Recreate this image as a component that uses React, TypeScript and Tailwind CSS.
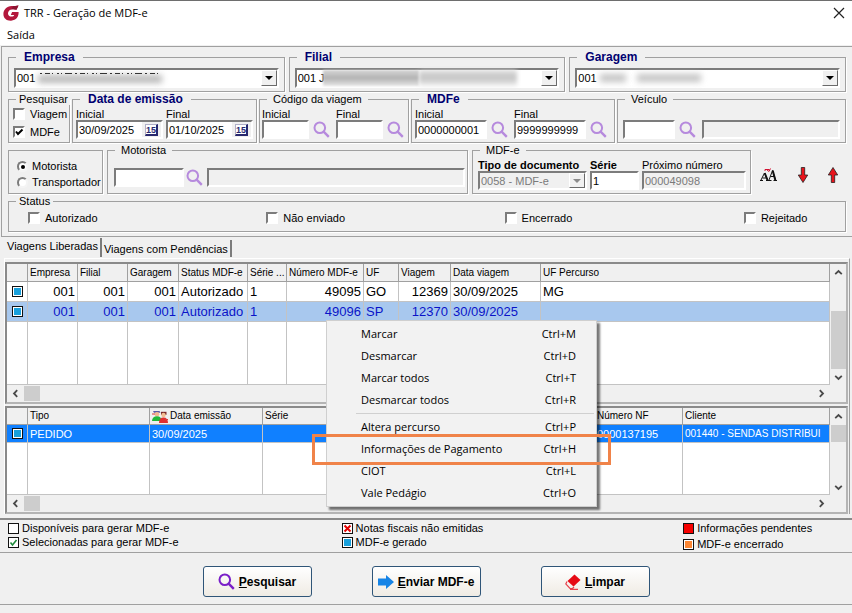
import type { ReactNode } from 'react'
import clsx from 'clsx'

const SUNKEN = 'border-2 border-t-[#7c7c7c] border-l-[#7c7c7c] border-r-white border-b-white'
const RAISED = 'border border-t-white border-l-white border-r-[#6a6a6a] border-b-[#6a6a6a]'

function Logo() {
  return (
    <svg viewBox="0 0 16 16" className="w-4 h-4 shrink-0">
      <path d="M15.500 .5 13.500 4.800C11.800 4.100 10 4 8.400 4.400 6.200 5 5 6.500 5 8.400c0 2 1.500 3.200 3.600 3.200 1.300 0 2.300-.5 2.600-1.500H7.800l1.300-3h6.500c.2 4.600-2.300 8.400-7.500 8.600C3.500 15.900.4 13.200.4 9 .4 4.600 3.700 1.200 8.600.9c2.400-.1 4.700.4 6.900-.4z" fill="#b3183c" />
      <path d="M15.500.5 13.500 4.800C11.800 4.100 10 4 8.400 4.400L10.200.9c1.800 0 3.600.2 5.300-.4z" fill="#8c1330" />
    </svg>
  )
}

function SearchIcon({ color = '#b68add' }: { color?: string }) {
  return (
    <svg viewBox="0 0 17 17" className="w-[17px] h-[17px]" fill="none" stroke={color}>
      <circle cx="6.800" cy="6.800" r="5.300" strokeWidth="2" />
      <path d="M10.600 10.600 15.800 15.800" strokeWidth="2.400" />
    </svg>
  )
}

function SearchButton({ label }: { label: string }) {
  return (
    <button type="button" aria-label={label} className="shrink-0 w-[19px] h-[19px] flex items-center">
      <SearchIcon />
    </button>
  )
}

function Chevron({ dir }: { dir: 'up' | 'down' | 'left' | 'right' }) {
  const paths = {
    up: 'M1.200 6.200 4.500 3l3.300 3.200',
    down: 'M1.200 2.800 4.500 6l3.300-3.200',
    left: 'M6.200 1.200 3 4.500l3.200 3.300',
    right: 'M2.800 1.200 6 4.500 2.800 7.800',
  }
  return (
    <svg viewBox="0 0 9 9" className="w-[9px] h-[9px]" fill="none" stroke="#4a4a4a" strokeWidth="1.800">
      <path d={paths[dir]} />
    </svg>
  )
}

type GroupProps = { title: string; bold?: boolean; near?: boolean; className?: string; children: ReactNode }

function Group({ title, bold, near, className, children }: GroupProps) {
  return (
    <fieldset className={clsx('min-w-0 border border-[#a0a0a0] shadow-[1px_1px_0_#fff]', className)}>
      <legend
        className={clsx(
          'ml-[7px] leading-[12px] whitespace-nowrap',
          bold ? 'px-2 text-[12px] font-bold text-[#000070]' : near ? 'px-[3px]' : 'px-[6px]',
        )}
      >
        {title}
      </legend>
      {children}
    </fieldset>
  )
}

function DropArrow({ disabled }: { disabled?: boolean }) {
  return (
    <span className={clsx('absolute top-[2px] right-[2px] bottom-[2px] w-4 flex items-center justify-center bg-[#f0f0f0] pointer-events-none', RAISED)}>
      <svg viewBox="0 0 8 4" className="w-2 h-1">
        <path d="M0 0h8L4 4z" fill={disabled ? '#8a8a8a' : '#000'} />
      </svg>
    </span>
  )
}

function Combo({ label, value, children }: { label: string; value: string; children?: ReactNode }) {
  return (
    <div className="relative mx-[5px] mt-[5px] mb-[3px]">
      <select aria-label={label} className={clsx('block w-full h-5 pl-px appearance-none bg-white', SUNKEN)}>
        <option>{value}</option>
      </select>
      {children}
      <DropArrow />
    </div>
  )
}

type FieldProps = { id: string; label?: string; value?: string; className: string; disabled?: boolean; bold?: boolean }

function Field({ id, label, value = '', className, disabled, bold }: FieldProps) {
  return (
    <div className={clsx('min-w-0', className)}>
      {label && (
        <label htmlFor={id} className={clsx('block leading-[12px] whitespace-nowrap', bold && 'font-bold')}>
          {label}
        </label>
      )}
      <input
        id={id}
        aria-label={label ? undefined : id}
        defaultValue={value}
        disabled={disabled}
        className={clsx('block w-full h-[19px] px-px', SUNKEN, disabled ? 'bg-[#f0f0f0] text-[#7a7a7a]' : 'bg-white')}
      />
    </div>
  )
}

function DateField({ id, label, value }: { id: string; label: string; value: string }) {
  return (
    <div className="relative flex-1 min-w-0">
      <label htmlFor={id} className="block leading-[12px]">{label}</label>
      <input id={id} defaultValue={value} className={clsx('block w-full h-[19px] px-px bg-white', SUNKEN)} />
      <button
        type="button"
        aria-label={`Calendário ${label}`}
        className="absolute right-[2px] bottom-[2px] w-[19px] h-[15px] bg-[#f0f0f0] flex items-center justify-center"
      >
        <span className="w-[13px] h-3 border border-t-[#b0b0c8] border-l-[#b0b0c8] border-r-2 border-b-2 border-r-[#28286e] border-b-[#28286e] bg-white text-[9px] leading-[10px] font-bold text-[#28286e]">15</span>
      </button>
    </div>
  )
}

function Check({ label, checked }: { label: string; checked?: boolean }) {
  return (
    <label className="flex items-center gap-[5px] h-[18px] whitespace-nowrap">
      <span className="relative w-3 h-3 shrink-0">
        <input type="checkbox" defaultChecked={checked} className={clsx('peer block w-3 h-3 appearance-none bg-white', SUNKEN)} />
        <svg viewBox="0 0 12 12" className="absolute inset-0 hidden peer-checked:block pointer-events-none" fill="none" stroke="#000" strokeWidth="2">
          <path d="M3 5.500 5 8l4.500-4.500" />
        </svg>
      </span>
      {label}
    </label>
  )
}

function Radio({ label, checked }: { label: string; checked?: boolean }) {
  return (
    <label className="flex items-center gap-1 h-4 whitespace-nowrap">
      <span className="relative w-[11px] h-[11px] shrink-0">
        <input
          type="radio"
          name="responsavel"
          defaultChecked={checked}
          className="peer block w-[11px] h-[11px] appearance-none rounded-full bg-white border-2 border-t-[#7c7c7c] border-l-[#7c7c7c] border-r-[#f4f4f4] border-b-[#f4f4f4]"
        />
        <span className="absolute left-[4px] top-[4px] w-1 h-1 rounded-full bg-black hidden peer-checked:block pointer-events-none" />
      </span>
      {label}
    </label>
  )
}

type Mark = 'empty' | 'selected' | 'error' | 'done' | 'pending' | 'closed'

function StatusMark({ kind }: { kind: Mark }) {
  const fill = { empty: '#fff', selected: '#fff', error: '#fff', done: '#18a0dc', pending: '#f50000', closed: '#fb8633' }[kind]
  return (
    <svg viewBox="0 0 11 11" className="w-[11px] h-[11px] shrink-0">
      <rect x=".5" y=".5" width="10" height="10" fill={kind === 'pending' ? fill : '#fff'} stroke="#111" />
      {(kind === 'done' || kind === 'closed') && <rect x="2" y="2" width="7" height="7" fill={fill} />}
      {kind === 'selected' && <path d="M2.500 5.500 4.500 8l4-5" fill="none" stroke="#1f8a3c" strokeWidth="1.600" />}
      {kind === 'error' && <path d="m2.500 2.500 6 6m0-6-6 6" stroke="#e30000" strokeWidth="2" />}
    </svg>
  )
}

function GridFrame({ thumb, children }: { thumb: ReactNode; children: ReactNode }) {
  return (
    <div className="flex border-2 border-t-[#8a8a8a] border-l-[#8a8a8a] border-r-[#b4b4b4] border-b-[#b4b4b4] bg-white">
      <div className="flex-1 min-w-0">
        {children}
        <div className="flex items-center h-[17px] bg-[#f0f0f0]">
          <button type="button" aria-label="Rolar para a esquerda" className="w-[17px] flex justify-center"><Chevron dir="left" /></button>
          <span className="w-4 h-[15px] bg-[#cdcdcd]" />
          <button type="button" aria-label="Rolar para a direita" className="ml-auto w-[17px] flex justify-center"><Chevron dir="right" /></button>
        </div>
      </div>
      <div className="w-4 pb-[17px] flex flex-col bg-[#f0f0f0]">
        <button type="button" aria-label="Rolar para cima" className="h-[17px] flex items-center justify-center"><Chevron dir="up" /></button>
        <div className="flex-1 flex flex-col pl-px">{thumb}</div>
        <button type="button" aria-label="Rolar para baixo" className="h-4 flex items-center justify-center"><Chevron dir="down" /></button>
      </div>
    </div>
  )
}

const cell = 'border-r border-b border-[#c3c3c3] px-[2px] overflow-hidden whitespace-nowrap'
const headCell = 'border-r border-b border-[#a0a0a0] px-[2px] overflow-hidden whitespace-nowrap bg-[#f0f0f0] text-[10px] font-normal text-left'

const tripColumns = ['', 'Empresa', 'Filial', 'Garagem', 'Status MDF-e', 'Série ...', 'Número MDF-e', 'UF', 'Viagem', 'Data viagem', 'UF Percurso']
const trips = [
  ['001', '001', '001', 'Autorizado', '1', '49095', 'GO', '12369', '30/09/2025', 'MG'],
  ['001', '001', '001', 'Autorizado', '1', '49096', 'SP', '12370', '30/09/2025', ''],
]
const rightAligned = [0, 1, 2, 5, 7]

function TripGrid() {
  return (
    <table className="w-full table-fixed border-separate border-spacing-0">
      <colgroup>
        <col className="w-[21px]" />
        <col className="w-[50px]" />
        <col className="w-[50px]" />
        <col className="w-[51px]" />
        <col className="w-[69px]" />
        <col className="w-[39px]" />
        <col className="w-[77px]" />
        <col className="w-[35px]" />
        <col className="w-[52px]" />
        <col className="w-[90px]" />
        <col />
      </colgroup>
      <thead>
        <tr className="h-[18px]">
          {tripColumns.map((name) => <th key={name} className={headCell}>{name}</th>)}
        </tr>
      </thead>
      <tbody className="text-[13px] leading-[19px]">
        {trips.map((row, i) => (
          <tr key={row[5]} className={clsx('h-5', i === 1 && 'bg-[#a8c8ee] text-[#0a14c8]')}>
            <td className={cell}><span className="flex justify-center"><StatusMark kind="done" /></span></td>
            {row.map((value, c) => (
              <td key={c} className={clsx(cell, rightAligned.includes(c) && 'text-right')}>{value}</td>
            ))}
          </tr>
        ))}
        <tr className="h-[63px]">
          {tripColumns.map((name) => <td key={name} className={cell} />)}
        </tr>
      </tbody>
    </table>
  )
}

function PeopleIcon() {
  return (
    <svg viewBox="0 0 16 13" className="w-4 h-[13px] shrink-0">
      <path d="M1 1h6.500l1 1.800H2z" fill="#5a5aa8" />
      <circle cx="5" cy="4.200" r="2.300" fill="#f0b890" />
      <path d="M0 11c0-3 2-4.800 5-4.800S9.500 8 9.500 11z" fill="#1fb83a" />
      <path d="M9 1.800h5.500v3H9z" fill="#7a2a2a" />
      <circle cx="11.500" cy="5" r="2.200" fill="#f3bd92" />
      <path d="M7 13c0-3.500 1.500-5.500 4.500-5.500S16 9.500 16 13z" fill="#e02f2f" />
      <path d="M0 4h3M13 9.500h3" stroke="#d83a3a" />
    </svg>
  )
}

function OrderGrid() {
  const body = ['PEDIDO', '30/09/2025', '', '', '0000137195']
  return (
    <table className="w-full table-fixed border-separate border-spacing-0">
      <colgroup>
        <col className="w-[21px]" />
        <col className="w-[122px]" />
        <col className="w-[113px]" />
        <col className="w-[113px]" />
        <col className="w-[219px]" />
        <col className="w-[88px]" />
        <col />
      </colgroup>
      <thead>
        <tr className="h-[17px]">
          <th className={headCell} />
          <th className={headCell}>Tipo</th>
          <th className={headCell}><span className="flex items-center gap-[2px] h-4"><PeopleIcon />Data emissão</span></th>
          <th className={headCell}>Série</th>
          <th className={headCell} />
          <th className={headCell}>Número NF</th>
          <th className={headCell}>Cliente</th>
        </tr>
      </thead>
      <tbody>
        <tr className="h-[18px] bg-[#1080ff] text-white">
          <td className={cell}><span className="flex justify-center"><StatusMark kind="done" /></span></td>
          {body.map((value, i) => <td key={i} className={cell}>{value}</td>)}
          <td className={clsx(cell, 'text-[10px]')}>001440 - SENDAS DISTRIBUI</td>
        </tr>
        <tr className="h-[52px]">
          <td className={cell} />
          {body.map((_, i) => <td key={i} className={cell} />)}
          <td className={cell} />
        </tr>
      </tbody>
    </table>
  )
}

const menuTop = [['Marcar', 'Ctrl+M'], ['Desmarcar', 'Ctrl+D'], ['Marcar todos', 'Ctrl+T'], ['Desmarcar todos', 'Ctrl+R']]
const menuBottom = [['Altera percurso', 'Ctrl+P'], ['Informações de Pagamento', 'Ctrl+H'], ['CIOT', 'Ctrl+L'], ['Vale Pedágio', 'Ctrl+O']]

function MenuItem({ label, keys }: { label: string; keys: string }) {
  return (
    <button type="button" role="menuitem" className="flex w-full justify-between items-center h-[22px] pl-[34px] pr-5">
      <span>{label}</span>
      <span>{keys}</span>
    </button>
  )
}

function ContextMenu() {
  return (
    <div
      role="menu"
      className="absolute left-[326px] top-[83px] w-[271px] py-[2px] bg-[#f2f2f2] border border-[#cfcfcf] shadow-[3px_3px_2px_#00000088] font-['Open_Sans',sans-serif]"
    >
      {menuTop.map(([label, keys]) => <MenuItem key={label} label={label} keys={keys} />)}
      <div className="h-[5px] ml-[29px] mr-[2px] flex items-center"><span className="h-px w-full bg-[#d0d0d0]" /></div>
      {menuBottom.map(([label, keys]) => <MenuItem key={label} label={label} keys={keys} />)}
      <div className="absolute -left-[15px] top-[113px] w-[299px] h-[31px] border-3 border-[#f08349] pointer-events-none" />
    </div>
  )
}

function LegendItem({ kind, children }: { kind: Mark; children: ReactNode }) {
  return (
    <div className="flex items-center gap-[3px] h-[14px] whitespace-nowrap">
      <StatusMark kind={kind} />
      {children}
    </div>
  )
}

function ActionButton({ icon, label }: { icon: ReactNode; label: string }) {
  return (
    <button
      type="button"
      className="w-[109px] h-[31px] flex items-center justify-center gap-1 rounded-[3px] border border-[#2f5578] bg-linear-to-b from-white to-[#efebe4] text-[12px] font-bold whitespace-nowrap"
    >
      {icon}
      <span><u>{label[0]}</u>{label.slice(1)}</span>
    </button>
  )
}

export default function App() {
  return (
    <div className="relative min-h-screen flex flex-col bg-[#f0f0f0] text-black text-[11px] leading-[14px] font-['Liberation_Sans',Arial,sans-serif] overflow-hidden">
      <header className="bg-white border-t border-[#6e6e6e] font-['Open_Sans',sans-serif]">
        <div className="flex items-center h-6 pl-[3px] pr-[7px]">
          <Logo />
          <h1 className="ml-[5px]">TRR - Geração de MDF-e</h1>
          <button type="button" aria-label="Fechar" className="ml-auto">
            <svg viewBox="0 0 12 12" className="w-3 h-3" stroke="#222" strokeWidth="1.200"><path d="m1 1 10 10M11 1 1 11" /></svg>
          </button>
        </div>
        <nav className="h-5 pl-[7px] flex items-center"><button type="button">Saída</button></nav>
      </header>

      <form className="mt-px ml-px border-t border-l border-[#a0a0a0] border-b pl-[6px] pr-[6px] pt-1 pb-1 flex flex-col gap-px">
        <div className="grid grid-cols-3 gap-x-[4px]">
          <Group title="Empresa" bold>
            <Combo label="Empresa" value="001">
              <span className="absolute left-6 top-[7px] w-[124px] h-[8px] bg-[#b8b8b8] blur-[3px]" />
              <svg viewBox="0 0 122 1" className="absolute left-[26px] top-[5px] w-[122px] h-px">
                <path d="M0 .5h122" stroke="#333" strokeDasharray="2 3 5 2 1 4 2 2 1 3 7 3" />
              </svg>
            </Combo>
          </Group>
          <Group title="Filial" bold>
            <Combo label="Filial" value="001 J">
              <span className="absolute left-[28px] top-[2px] w-[96px] h-4 bg-linear-to-b from-[#d6d6d6] via-[#b4b4b4] to-[#e6e6e6] blur-[1px]" />
              <span className="absolute left-[124px] top-[2px] w-[98px] h-4 bg-linear-to-b from-[#e0e0e0] via-[#c4c4c4] to-[#f0f0f0] blur-[2px]" />
            </Combo>
          </Group>
          <Group title="Garagem" bold>
            <Combo label="Garagem" value="001">
              <span className="absolute left-[25px] top-[6px] w-[26px] h-2 bg-[#c4c4c4] blur-[3px]" />
              <span className="absolute left-[62px] top-[6px] w-[64px] h-2 bg-[#c4c4c4] blur-[3px]" />
            </Combo>
          </Group>
        </div>

        <div className="flex gap-[2px]">
          <Group title="Pesquisar" near className="w-[62px]">
            <div className="pl-1"><Check label="Viagem" /><Check label="MDFe" checked /></div>
          </Group>
          <Group title="Data de emissão" bold className="w-[185px]">
            <div className="flex gap-[3px] px-[3px] pt-[3px] pb-[3px]">
              <DateField id="emissao-inicial" label="Inicial" value="30/09/2025" />
              <DateField id="emissao-final" label="Final" value="01/10/2025" />
            </div>
          </Group>
          <Group title="Código da viagem" className="w-[150px]">
            <div className="flex items-end gap-1 px-[2px] pt-[3px] pb-[3px]">
              <Field id="viagem-inicial" label="Inicial" className="flex-1" />
              <SearchButton label="Buscar viagem inicial" />
              <Field id="viagem-final" label="Final" className="flex-1" />
              <SearchButton label="Buscar viagem final" />
            </div>
          </Group>
          <Group title="MDFe" bold className="w-[204px]">
            <div className="flex items-end gap-1 pl-[3px] pr-[5px] pt-[3px] pb-[3px]">
              <Field id="mdfe-inicial" label="Inicial" value="0000000001" className="flex-1" />
              <SearchButton label="Buscar MDFe inicial" />
              <Field id="mdfe-final" label="Final" value="9999999999" className="flex-1" />
              <SearchButton label="Buscar MDFe final" />
            </div>
          </Group>
          <Group title="Veículo" className="flex-1">
            <div className="flex items-end gap-1 px-[5px] pt-[15px] pb-[3px]">
              <Field id="veiculo-codigo" className="w-[52px]" />
              <SearchButton label="Buscar veículo" />
              <Field id="veiculo-nome" disabled className="flex-1" />
            </div>
          </Group>
        </div>

        <div className="flex gap-1">
          <div role="radiogroup" aria-label="Responsável" className="mt-[6px] w-[95px] border border-[#a0a0a0] shadow-[1px_1px_0_#fff] pl-2 pt-[7px]">
            <Radio label="Motorista" checked />
            <Radio label="Transportador" />
          </div>
          <Group title="Motorista" className="flex-1">
            <div className="flex items-end gap-[2px] pl-[6px] pr-[2px] pt-3 pb-[5px]">
              <Field id="motorista-codigo" className="w-[70px]" />
              <SearchButton label="Buscar motorista" />
              <Field id="motorista-nome" disabled className="flex-1" />
            </div>
          </Group>
          <Group title="MDF-e" className="w-[279px]">
            <div className="flex items-end gap-[3px] pl-[5px] pr-1 pt-[3px] pb-[3px]">
              <div className="w-[109px]">
                <label htmlFor="tipo-documento" className="block leading-[12px] font-bold whitespace-nowrap">Tipo de documento</label>
                <div className="relative">
                  <select id="tipo-documento" disabled className={clsx('block w-full h-[19px] pl-px appearance-none bg-[#f0f0f0] text-[#7a7a7a] opacity-100', SUNKEN)}>
                    <option>0058 - MDF-e</option>
                  </select>
                  <DropArrow disabled />
                </div>
              </div>
              <Field id="serie" label="Série" bold value="1" className="w-[49px]" />
              <Field id="proximo-numero" label="Próximo número" disabled value="000049098" className="flex-1" />
            </div>
          </Group>
          <div className="w-[91px] pl-[5px] pr-2 pt-3 flex items-center justify-between">
            <button type="button" aria-label="Fonte">
              <svg viewBox="0 0 17 14" className="w-[17px] h-[14px]" fill="none" stroke="#111">
                <path d="M1 12 4.500 5 7.500 12M2.500 10h4M0 12.500h3M6 12.500h3M9 12 12.500 2.500 15.500 12M10.500 8.500h4M8.500 12.500h3M13.500 12.500H17" />
                <path d="M12.700 2.500 15.300 12M4.700 5 7.500 12" strokeWidth="2" />
                <path d="M5 3V1.500h4.500M7 2l2 1.500L10.500.5" stroke="#d01030" />
              </svg>
            </button>
            <button type="button" aria-label="Descer">
              <svg viewBox="0 0 10 16" className="w-[10px] h-4"><path d="M3.300.5h3.400V8h3L5 15.500 .3 8h3z" fill="#e8141c" stroke="#222" strokeWidth=".8" /></svg>
            </button>
            <button type="button" aria-label="Subir">
              <svg viewBox="0 0 10 16" className="w-[10px] h-4"><path d="M3.300 15.500h3.400V8h3L5 .5 .3 8h3z" fill="#e8141c" stroke="#222" strokeWidth=".8" /></svg>
            </button>
          </div>
        </div>

        <Group title="Status" near>
          <div className="grid grid-cols-[238fr_238fr_239fr_101fr] pl-[19px] pt-[2px] pb-1">
            <Check label="Autorizado" />
            <Check label="Não enviado" />
            <Check label="Encerrado" />
            <Check label="Rejeitado" />
          </div>
        </Group>
      </form>

      <main className="relative border-b-2 border-[#8a8a8a] pb-1">
        <div role="tablist" className="flex items-end h-[21px] pb-px">
          <button type="button" role="tab" aria-selected="true" className="h-[19px] pl-[7px] pr-[2px] border-r-2 border-[#7c7c7c] pb-1">Viagens Liberadas</button>
          <button type="button" role="tab" aria-selected="false" className="h-[17px] px-[2px] border-r-2 border-[#7c7c7c]">Viagens com Pendências</button>
        </div>
        <div className="ml-1 mr-[2px] pr-px pt-[3px] border-t border-l border-r border-t-white border-l-white border-r-[#a0a0a0] flex flex-col gap-[2px]">
          <GridFrame thumb={<span className="mt-auto h-[58px] bg-[#cdcdcd]" />}><TripGrid /></GridFrame>
          <GridFrame thumb={<span className="h-[17px] bg-[#cdcdcd]" />}><OrderGrid /></GridFrame>
        </div>
        <ContextMenu />
      </main>

      <section className="grid grid-cols-[334fr_342fr_169fr] h-[33px] pl-2 pt-px border-b border-[#a0a0a0]">
        <div>
          <LegendItem kind="empty">Disponíveis para gerar MDF-e</LegendItem>
          <LegendItem kind="selected">Selecionadas para gerar MDF-e</LegendItem>
        </div>
        <div>
          <LegendItem kind="error">Notas fiscais não emitidas</LegendItem>
          <LegendItem kind="done">MDF-e gerado</LegendItem>
        </div>
        <div className="flex flex-col gap-[2px]">
          <LegendItem kind="pending">Informações pendentes</LegendItem>
          <LegendItem kind="closed">MDF-e encerrado</LegendItem>
        </div>
      </section>

      <footer className="flex justify-center gap-[60px] pt-[13px] pb-[7px] border-b border-[#a0a0a0]">
        <ActionButton label="Pesquisar" icon={<SearchIcon color="#7a1fc8" />} />
        <ActionButton
          label="Enviar MDF-e"
          icon={<svg viewBox="0 0 16 14" className="w-4 h-[14px]"><path d="M0 3.500h8V0l8 7-8 7v-3.500H0z" fill="#1684e6" /></svg>}
        />
        <ActionButton
          label="Limpar"
          icon={
            <svg viewBox="0 0 16 16" className="w-4 h-4">
              <path d="M9.500.5 15.500 6 8.500 12.500 2.500 7z" fill="#e60a14" />
              <path d="M2 7.500 .8 10 5 14.500h2.500L9 13M5 15.300h8" fill="none" stroke="#e6404a" strokeWidth="1.200" />
            </svg>
          }
        />
      </footer>
    </div>
  )
}
